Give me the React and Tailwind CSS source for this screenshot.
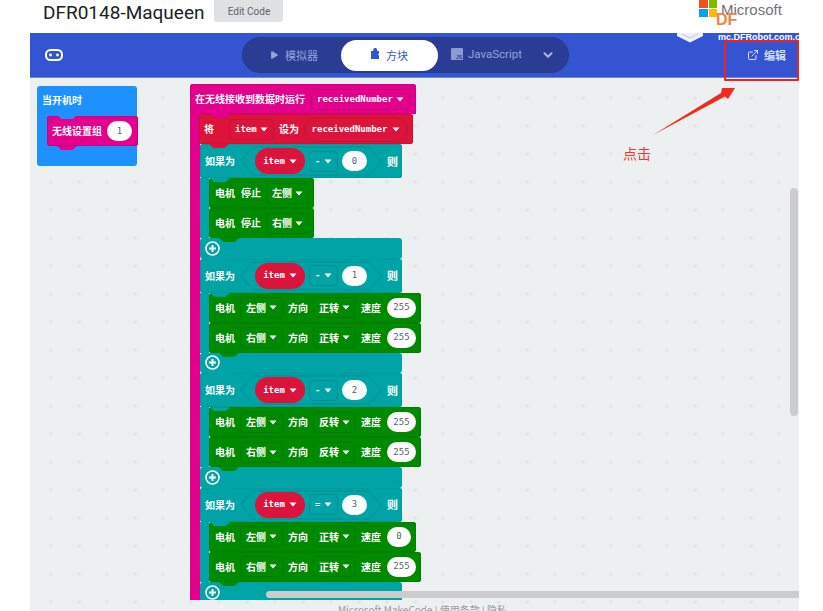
import { ExternalLink, Play, ChevronDown } from 'lucide-react'

const cjk = "font-['Noto_Sans_CJK_SC',sans-serif]"

const Caret = () => (
    <svg width="8" height="5" viewBox="0 0 8 5" className="shrink-0">
        <polygon points="0.5,0.5 7.5,0.5 4,4.5" fill="#fff" />
    </svg>
)

const Label = ({ children, className = '' }) => (
    <span className={`${cjk} text-[10px] font-bold leading-none text-white whitespace-nowrap ${className}`}>
        {children}
    </span>
)

const Mono = ({ children }) => (
    <span className="font-['DejaVu_Sans_Mono',monospace] text-[9px] font-bold leading-none text-white whitespace-nowrap">
        {children}
    </span>
)

// dropdown field, square-ish with a darker outline
const Field = ({ text, mono, border, className = '' }) => (
    <div className={`flex h-[21px] items-center justify-between rounded-[4px] border px-[5px] ${border} ${className}`}>
        {mono ? <Mono>{text}</Mono> : <Label>{text}</Label>}
        <Caret />
    </div>
)

const NumPill = ({ value, className = 'w-[25px]' }) => (
    <div className={`flex h-[20px] items-center justify-center rounded-full bg-white font-['DejaVu_Sans_Mono',monospace] text-[9px] leading-none text-[#575e75] ${className}`}>
        {value}
    </div>
)

// the little tab under a block which drops in the next block's notch
const Bump = ({ color, left = 'left-[10px]' }) => (
    <div className={`absolute -bottom-[4px] z-10 h-[4px] w-[20px] [clip-path:polygon(0_0,100%_0,78%_100%,22%_100%)] ${left} ${color}`} />
)

const PlusButton = () => (
    <svg width="15" height="15" viewBox="0 0 15 15">
        <circle cx="7.5" cy="7.5" r="6.5" fill="none" stroke="#fff" strokeWidth="1.5" />
        <path d="M7.5 4v7M4 7.5h7" stroke="#fff" strokeWidth="2" />
    </svg>
)

const StopRow = ({ side }) => (
    <div className="relative flex h-[30px] w-[105px] items-center rounded-[3px] bg-[#008a00] pl-[6px] ring-1 ring-inset ring-[#007f00]">
        <Label>电机</Label>
        <Label className="ml-[6px]">停止</Label>
        <Field text={side} border="border-[#007a00]" className="ml-[5px] w-[43px]" />
        <Bump color="bg-[#008a00]" />
    </div>
)

const MotorRow = ({ side, dir, speed }) => (
    <div className={`relative flex h-[30px] items-center rounded-[3px] bg-[#008a00] pl-[6px] ring-1 ring-inset ring-[#007f00] ${speed === '0' ? 'w-[207px]' : 'w-[212px]'}`}>
        <Label>电机</Label>
        <Field text={side} border="border-[#007a00]" className="ml-[5px] w-[43px]" />
        <Label className="ml-[5px]">方向</Label>
        <Field text={dir} border="border-[#007a00]" className="ml-[5px] w-[43px]" />
        <Label className="ml-[5px]">速度</Label>
        <NumPill value={speed} className={speed === '0' ? 'ml-[6px] w-[24px]' : 'ml-[6px] w-[29px]'} />
        <Bump color="bg-[#008a00]" />
    </div>
)

const IfGroup = ({ op, num, rows }) => (
    <div className="flex flex-col">
        <div className="relative flex h-[34px] w-[202px] items-center rounded-[3px] bg-[#00a4a6] pl-[5px] ring-1 ring-inset ring-[#009a9c]">
            <Label>如果为</Label>
            <div className="relative ml-[5px] flex h-[30px] w-[142px] items-center pl-[15px]">
                <svg className="absolute inset-0" width="142" height="30" viewBox="0 0 142 30">
                    <polygon points="0.5,15 13,1 129,1 141.5,15 129,29 13,29" fill="none" stroke="#008f91" />
                </svg>
                <div className="relative flex h-[26px] w-[50px] items-center justify-center gap-[4px] rounded-full bg-[#dc143c]">
                    <Mono>item</Mono>
                    <Caret />
                </div>
                <Field text={op} mono border="border-[#008f91]" className="relative ml-[4px] w-[29px]" />
                <NumPill value={num} className="relative ml-[4px] w-[25px]" />
            </div>
            <Label className="ml-[5px] text-[11px]">则</Label>
            <Bump color="bg-[#00a4a6]" />
        </div>
        <div className="flex">
            <div className="w-[9px] bg-[#00a4a6]" />
            <div className="flex flex-col">{rows}</div>
        </div>
        <div className="relative flex h-[20.67px] w-[202px] items-center rounded-[3px] bg-[#00a4a6] pl-[5px]">
            <PlusButton />
            <Bump color="bg-[#00a4a6]" />
        </div>
    </div>
)

const WhenStarted = () => (
    <div className="h-[80px] w-[100px] shrink-0 rounded-[3px] bg-[#1e90ff] pt-[9px]">
        <Label className="ml-[5px] block h-[21px]">当开机时</Label>
        <div className="relative ml-[10px] flex h-[30px] w-[91px] items-center rounded-[3px] bg-[#e3008c] pl-[5px] ring-1 ring-inset ring-[#d00080]">
            <div className="absolute -top-px left-[10px] h-[4px] w-[20px] bg-[#1e90ff] [clip-path:polygon(0_0,100%_0,78%_100%,22%_100%)]" />
            <Label>无线设置组</Label>
            <NumPill value="1" className="ml-[5px] w-[25px]" />
            <Bump color="bg-[#e3008c]" />
        </div>
    </div>
)

const OnReceived = () => (
    <div className="h-[516px] w-[240px] shrink-0 overflow-hidden">
        <div className="relative flex h-[30px] w-[226px] items-center rounded-t-[3px] bg-[#e3008c] pl-[5px] ring-1 ring-inset ring-[#d00080]">
            <Label>在无线接收到数据时运行</Label>
            <Field text="receivedNumber" mono border="border-[#cc007e]" className="ml-[6px] w-[99px]" />
            <Bump color="bg-[#e3008c]" left="left-[20px]" />
        </div>
        <div className="flex">
            <div className="w-[10px] shrink-0 bg-[#e3008c]" />
            <div className="flex flex-col">
                <div className="relative -ml-px flex h-[30px] w-[214px] items-center rounded-[3px] bg-[#dc143c] pl-[5px] ring-1 ring-inset ring-[#cc1236]">
                    <Label>将</Label>
                    <Field text="item" mono border="border-[#c61236]" className="ml-[15px] w-[45px]" />
                    <Label className="ml-[5px]">设为</Label>
                    <div className="ml-[5px] flex h-[25px] w-[104px] items-center justify-center gap-[5px] rounded-full border border-[#c61236]">
                        <Mono>receivedNumber</Mono>
                        <Caret />
                    </div>
                    <Bump color="bg-[#dc143c]" />
                </div>
                <IfGroup
                    op="-"
                    num="0"
                    rows={<><StopRow side="左侧" /><StopRow side="右侧" /></>}
                />
                <IfGroup
                    op="-"
                    num="1"
                    rows={<><MotorRow side="左侧" dir="正转" speed="255" /><MotorRow side="右侧" dir="正转" speed="255" /></>}
                />
                <IfGroup
                    op="-"
                    num="2"
                    rows={<><MotorRow side="左侧" dir="反转" speed="255" /><MotorRow side="右侧" dir="反转" speed="255" /></>}
                />
                <IfGroup
                    op="="
                    num="3"
                    rows={<><MotorRow side="左侧" dir="正转" speed="0" /><MotorRow side="右侧" dir="正转" speed="255" /></>}
                />
            </div>
        </div>
    </div>
)

const EditorHeader = () => (
    <div className="relative flex h-[45px] shrink-0 items-center border-b border-[#6f86e0] bg-[#3454d1] pl-[15px]">
        <svg width="18" height="12" viewBox="0 0 18 12">
            <rect x="1" y="1" width="16" height="10" rx="4.5" fill="none" stroke="#fff" strokeWidth="2" />
            <circle cx="5.5" cy="6" r="1.4" fill="#fff" />
            <circle cx="12.5" cy="6" r="1.4" fill="#fff" />
        </svg>
        <div className="ml-[179px] flex h-[36px] w-[327px] items-center rounded-full border border-[#26398f] bg-[#2a3c94] pl-[26px] text-[11px] text-[#95a3d8]">
            <Play size={10} fill="#95a3d8" strokeWidth={0} />
            <span className={`${cjk} ml-[6px] w-[33px] whitespace-nowrap`}>模拟器</span>
            <div className="ml-[23px] flex h-[31px] w-[97px] items-center justify-center gap-[6px] rounded-full bg-white text-[#3454d1]">
                <svg width="9" height="11" viewBox="0 0 9 11" className="-mt-[3px]">
                    <path d="M0 3h2.5a2 2 0 1 1 3.4 0H8v2.2a1.5 1.5 0 0 0 0 2.6V11H0z" fill="#3454d1" />
                </svg>
                <span className={`${cjk} whitespace-nowrap`}>方块</span>
            </div>
            <div className="-mt-[2px] ml-[13px] flex h-[12px] w-[12px] items-end justify-end rounded-[1px] bg-[#8b9ad2] pr-px font-['Liberation_Sans',sans-serif] text-[5px] font-bold leading-[6px] text-[#2a3c94]">
                JS
            </div>
            <span className="ml-[5px] font-['Roboto',sans-serif] text-[11.5px]">JavaScript</span>
            <ChevronDown size={14} strokeWidth={3.5} className="ml-[19px] text-[#a9b4e0]" />
        </div>
        <div className="ml-[178px] flex items-center gap-[5px] text-[#d9dff6]">
            <ExternalLink size={12} />
            <span className={`${cjk} text-[11px] font-bold whitespace-nowrap`}>编辑</span>
        </div>
    </div>
)

const App = () => {
    return (
        <div className="relative h-[611px] w-[823px] overflow-hidden bg-white font-['Roboto',sans-serif]">
            <div className="flex h-[33px] items-start pl-[43px]">
                <h1 className="text-[19px] leading-[26px] text-[#212121]">DFR0148-Maqueen</h1>
                <div className="ml-[10px] flex h-[22px] w-[69px] items-center justify-center rounded-b-[3px] bg-[#e0e1e2] text-[10px] text-[#5f6368]">
                    Edit Code
                </div>
            </div>

            <div className="ml-[30px] flex h-[578px] w-[769px] flex-col">
                <EditorHeader />
                <div className="relative flex-1 overflow-hidden bg-[#ecf0f1]">
                    <svg className="absolute inset-0" width="769" height="533">
                        <defs>
                            <pattern id="grid" x="0" y="0" width="28" height="28" patternUnits="userSpaceOnUse">
                                <path d="M21 18v4M19 20h4" stroke="#dde1e3" strokeWidth="1" fill="none" />
                            </pattern>
                        </defs>
                        <rect width="769" height="533" fill="url(#grid)" />
                    </svg>

                    <div className="relative flex items-start gap-[53px] pl-[7px] pt-[8px]">
                        <WhenStarted />
                        <div className="-mt-[2px]">
                            <OnReceived />
                        </div>
                    </div>

                    <p className={`${cjk} absolute left-[308px] top-[527px] text-[10px] leading-none text-[#9a9a9a] whitespace-nowrap`}>
                        Microsoft MakeCode | 使用条款 | 隐私
                    </p>

                    {/* scrollbars */}
                    <div className="absolute left-[760px] top-[110px] h-[228px] w-[8px] rounded-full bg-[#cccccc]" />
                    <div className="absolute left-[236px] top-[513px] h-[7px] w-[533px] rounded-l-full bg-[#cccccc]" />
                </div>
            </div>

            {/* watermark logos that sit on top of the screenshot */}
            <div className="absolute left-[699px] top-0 grid h-[17px] w-[18px] grid-cols-2 gap-px">
                <div className="bg-[#f25022]" />
                <div className="bg-[#7fba00]" />
                <div className="bg-[#00a4ef]" />
                <div className="bg-[#ffb900]" />
            </div>
            <span className="absolute left-[721px] top-[1px] font-['Liberation_Sans',sans-serif] text-[15px] leading-[18px] text-[#737373]">
                Microsoft
            </span>
            <span className="absolute left-[716px] top-[11px] font-['Liberation_Sans',sans-serif] text-[16px] font-bold leading-[18px] text-[#e8854a]">
                DF
            </span>
            <svg className="absolute left-[677px] top-[33px]" width="26" height="10" viewBox="0 0 26 10">
                <polygon points="0,0 0,3 13,9.5 26,3 26,0" fill="#eef1fb" />
                <path d="M5 1l8 4 8-4" fill="none" stroke="#aab6e8" strokeWidth="0.8" />
            </svg>
            <span className="absolute left-[718px] top-[33px] w-[81px] overflow-hidden font-['Liberation_Sans',sans-serif] text-[9px] font-bold leading-[9px] whitespace-nowrap text-white">
                mc.DFRobot.com.cn
            </span>

            {/* red annotation */}
            <div className="absolute left-[724px] top-[40px] h-[41px] w-[75px] rounded-[1px] border-2 border-[#ee2222]" />
            <svg className="absolute left-[650px] top-[85px]" width="90" height="53" viewBox="0 0 90 53">
                <polygon points="3,50 71,8 72,3 85,3 78,14 75,11.5" fill="#f02a20" />
            </svg>
            <span className={`${cjk} absolute left-[623px] top-[144px] text-[14px] leading-[18px] text-[#f0392b]`}>点击</span>
        </div>
    )
}

export default App
